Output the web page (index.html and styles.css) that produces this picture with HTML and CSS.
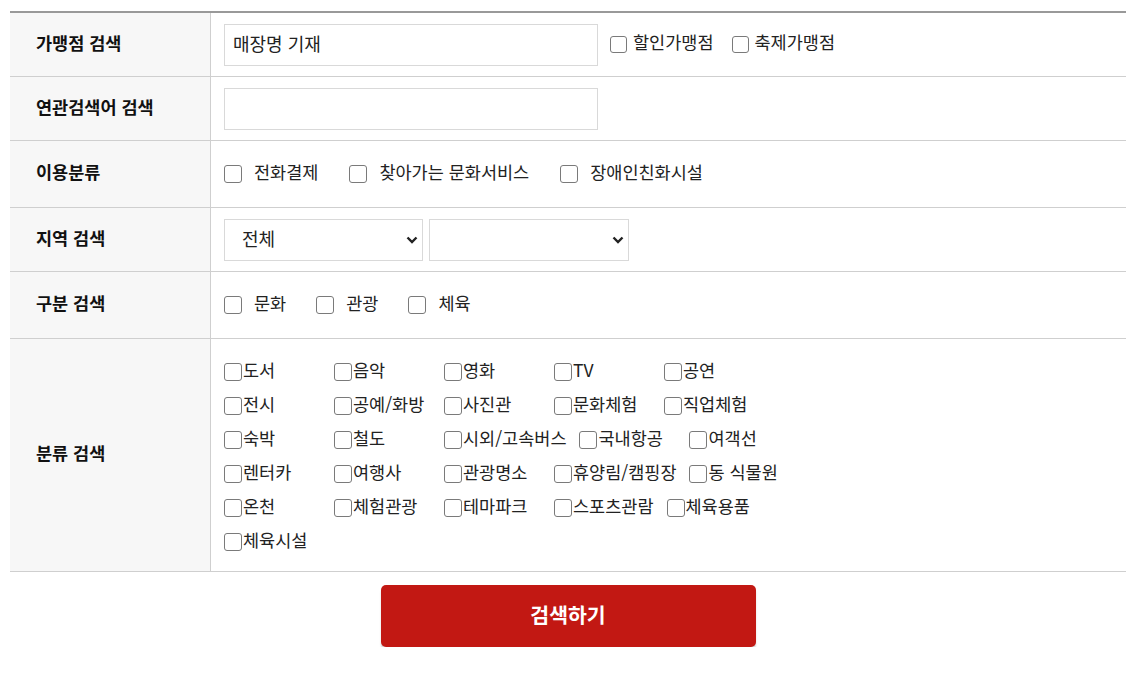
FILE: index.html
```html
<!DOCTYPE html>
<html lang="ko">
<head>
<meta charset="utf-8">
<title>가맹점 검색</title>
<link rel="stylesheet" href="styles.css">
</head>
<body>
<div class="wrap">
  <div class="search">
    <div class="row h64">
      <div class="th">가맹점 검색</div>
      <div class="td">
        <input class="txt" type="text" value="매장명 기재">
        <label class="chk chk-sm"><input type="checkbox"><span>할인가맹점</span></label>
        <label class="chk chk-sm"><input type="checkbox"><span>축제가맹점</span></label>
      </div>
    </div>
    <div class="row h64">
      <div class="th">연관검색어 검색</div>
      <div class="td">
        <input class="txt" type="text" value="">
      </div>
    </div>
    <div class="row h67">
      <div class="th">이용분류</div>
      <div class="td">
        <label class="chk chk-lg"><input type="checkbox"><span>전화결제</span></label>
        <label class="chk chk-lg"><input type="checkbox"><span>찾아가는 문화서비스</span></label>
        <label class="chk chk-lg"><input type="checkbox"><span>장애인친화시설</span></label>
      </div>
    </div>
    <div class="row h64">
      <div class="th">지역 검색</div>
      <div class="td">
        <span class="sel">
          <select><option>전체</option></select>
          <svg class="arrow" width="12" height="8" viewBox="0 0 12 8"><polyline points="1.5,1.5 6,6 10.5,1.5" fill="none" stroke="#222" stroke-width="2.4"/></svg>
        </span>
        <span class="sel">
          <select><option></option></select>
          <svg class="arrow" width="12" height="8" viewBox="0 0 12 8"><polyline points="1.5,1.5 6,6 10.5,1.5" fill="none" stroke="#222" stroke-width="2.4"/></svg>
        </span>
      </div>
    </div>
    <div class="row h67">
      <div class="th">구분 검색</div>
      <div class="td">
        <label class="chk chk-lg chk-tight"><input type="checkbox"><span>문화</span></label>
        <label class="chk chk-lg chk-tight"><input type="checkbox"><span>관광</span></label>
        <label class="chk chk-lg chk-tight"><input type="checkbox"><span>체육</span></label>
      </div>
    </div>
    <div class="row">
      <div class="th">분류 검색</div>
      <div class="td cats">
        <div class="line">
          <label class="cat"><input type="checkbox"><span>도서</span></label>
          <label class="cat"><input type="checkbox"><span>음악</span></label>
          <label class="cat"><input type="checkbox"><span>영화</span></label>
          <label class="cat"><input type="checkbox"><span>TV</span></label>
          <label class="cat"><input type="checkbox"><span>공연</span></label>
        </div>
        <div class="line">
          <label class="cat"><input type="checkbox"><span>전시</span></label>
          <label class="cat"><input type="checkbox"><span>공예/화방</span></label>
          <label class="cat"><input type="checkbox"><span>사진관</span></label>
          <label class="cat"><input type="checkbox"><span>문화체험</span></label>
          <label class="cat"><input type="checkbox"><span>직업체험</span></label>
        </div>
        <div class="line">
          <label class="cat"><input type="checkbox"><span>숙박</span></label>
          <label class="cat"><input type="checkbox"><span>철도</span></label>
          <label class="cat"><input type="checkbox"><span>시외/고속버스</span></label>
          <label class="cat"><input type="checkbox"><span>국내항공</span></label>
          <label class="cat"><input type="checkbox"><span>여객선</span></label>
        </div>
        <div class="line">
          <label class="cat"><input type="checkbox"><span>렌터카</span></label>
          <label class="cat"><input type="checkbox"><span>여행사</span></label>
          <label class="cat"><input type="checkbox"><span>관광명소</span></label>
          <label class="cat"><input type="checkbox"><span>휴양림/캠핑장</span></label>
          <label class="cat"><input type="checkbox"><span>동 식물원</span></label>
        </div>
        <div class="line">
          <label class="cat"><input type="checkbox"><span>온천</span></label>
          <label class="cat"><input type="checkbox"><span>체험관광</span></label>
          <label class="cat"><input type="checkbox"><span>테마파크</span></label>
          <label class="cat"><input type="checkbox"><span>스포츠관람</span></label>
          <label class="cat"><input type="checkbox"><span>체육용품</span></label>
        </div>
        <div class="line">
          <label class="cat"><input type="checkbox"><span>체육시설</span></label>
        </div>
      </div>
    </div>
  </div>
  <div class="btns">
    <button class="btn" type="button">검색하기</button>
  </div>
</div>
</body>
</html>
```

FILE: styles.css
```css
* { box-sizing: border-box; }

html, body {
  margin: 0;
  padding: 0;
  background: #fff;
}

body {
  font-family: "Noto Sans CJK KR", "Noto Sans", sans-serif;
  font-size: 17.5px;
  color: #222;
}

.wrap {
  padding: 11px 8px 0 10px;
}

.search {
  border-top: 2px solid #999;
}

.row {
  display: grid;
  grid-template-columns: 201px 1fr;
  border-bottom: 1px solid #cfcfcf;
}

.h64 { height: 64px; }
.h67 { height: 67px; }

.th {
  background: #f7f7f7;
  border-right: 1px solid #cfcfcf;
  display: flex;
  align-items: center;
  padding: 0 0 5px 26px;
  font-weight: bold;
  font-size: 17.5px;
  color: #111;
  line-height: 1.2;
}

.td {
  display: flex;
  align-items: center;
  padding-left: 13px;
  line-height: 1.2;
}

.txt {
  width: 374px;
  height: 42px;
  border: 1px solid #d9d9d9;
  padding: 0 8px 3px;
  font-family: inherit;
  font-size: 18px;
  color: #222;
  margin: 0 12px 0 0;
  outline: none;
}

input[type="checkbox"] {
  -webkit-appearance: none;
  appearance: none;
  width: 18px;
  height: 18px;
  margin: 0;
  border: 1px solid #7a7a7a;
  border-radius: 3px;
  background: #fff;
  flex: none;
}

.chk {
  display: inline-flex;
  align-items: center;
  color: #222;
}

.chk-sm { margin-right: 18px; }
.chk-sm input[type="checkbox"] { width: 17px; height: 17px; }
.chk-sm span { margin-left: 6px; position: relative; top: -3px; }

.chk-lg { margin-right: 31px; }
.chk-lg span { margin-left: 12px; position: relative; top: -3px; }
.chk-tight { margin-right: 30px; }

.sel {
  position: relative;
  display: inline-block;
  margin-right: 6px;
}

.sel select {
  -webkit-appearance: none;
  appearance: none;
  width: 199px;
  height: 42px;
  border: 1px solid #d9d9d9;
  background: #fff;
  padding: 0 24px 3px 17px;
  font-family: inherit;
  font-size: 18px;
  color: #222;
  outline: none;
  display: block;
  border-radius: 0;
}

.sel + .sel select { width: 200px; }

.arrow {
  position: absolute;
  right: 5px;
  top: 17px;
  pointer-events: none;
}

.cats {
  display: block;
  padding: 16px 0 12px 13px;
}

.line {
  display: flex;
  height: 34px;
  align-items: center;
}

.cat {
  display: inline-flex;
  align-items: center;
  min-width: 97px;
  margin-right: 13px;
  color: #222;
}

.cat span {
  margin-left: 1px;
  position: relative;
  top: -3px;
}

.btns {
  display: flex;
  justify-content: center;
  padding-top: 13px;
}

.btn {
  width: 375px;
  height: 62px;
  border: 0;
  border-radius: 5px;
  background: #c21813;
  color: #fff;
  font-family: inherit;
  font-size: 20.5px;
  font-weight: bold;
  padding: 0 0 5px;
  box-shadow: 0 3px 2px rgba(0, 0, 0, 0.16);
  cursor: pointer;
}
```
